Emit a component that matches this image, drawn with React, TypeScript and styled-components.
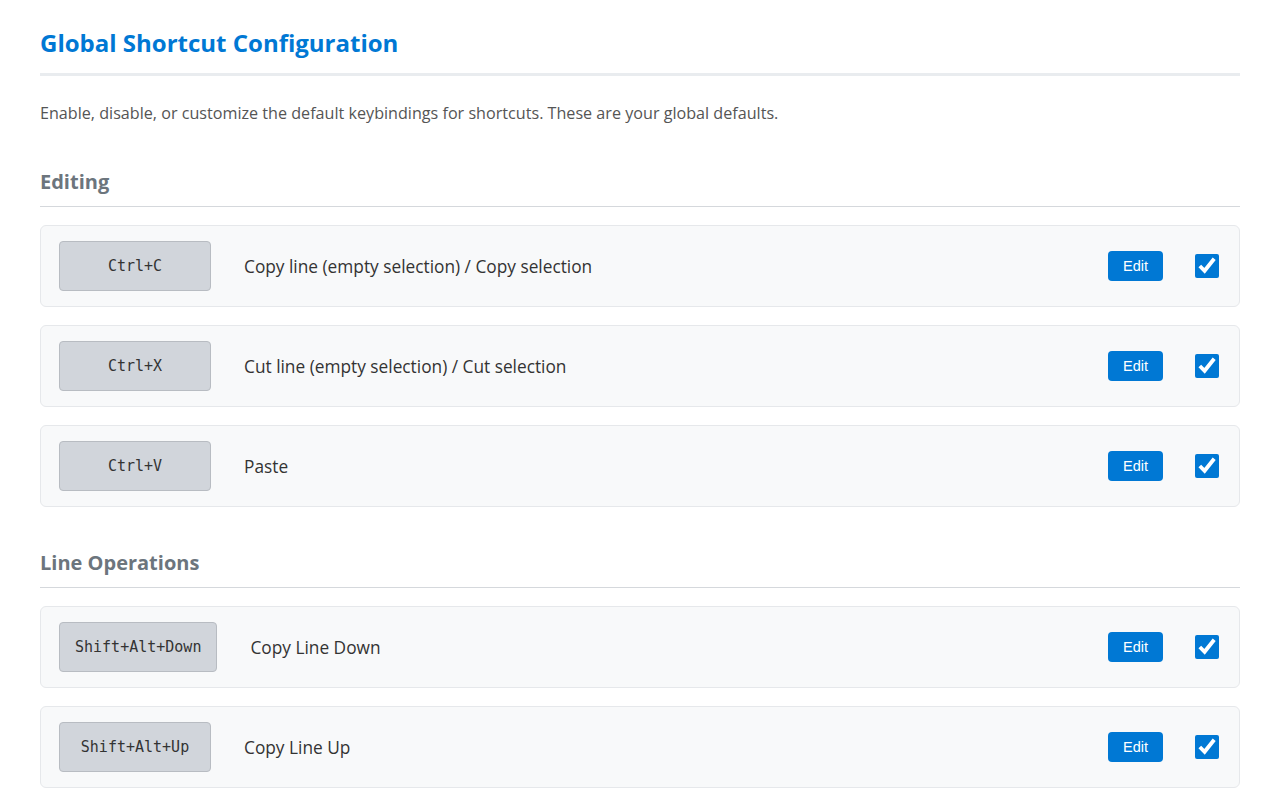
import React from "react";
import styled, { createGlobalStyle } from "styled-components";

const Global = createGlobalStyle`
  html, body { margin: 0; padding: 0; background: #ffffff; }
  body { font-family: "Open Sans", "Noto Sans", sans-serif; color: #333; }
  * { box-sizing: border-box; }
`;

const Page = styled.div`
  display: flex;
  flex-direction: column;
  max-width: 1200px;
  margin: 0 auto;
  padding-top: 27px;
`;

const Title = styled.h1`
  margin: 0;
  font-size: 24px;
  line-height: 32px;
  font-weight: 700;
  color: #0078d4;
  padding-bottom: 14px;
  border-bottom: 3px solid #e9ecef;
`;

const Description = styled.p`
  margin: 25px 0 19px;
  font-size: 16.15px;
  line-height: 24px;
  color: #555;
`;

const Section = styled.section`
  display: flex;
  flex-direction: column;
  gap: 18px;
  margin-top: 24px;
`;

const SectionTitle = styled.h2`
  margin: 0;
  font-size: 20px;
  line-height: 28px;
  font-weight: 700;
  color: #6c757d;
  padding-bottom: 10px;
  border-bottom: 1px solid #d5d8dc;
`;

const Row = styled.div`
  display: flex;
  align-items: center;
  height: 82px;
  padding: 0 20px 0 18px;
  background: #f8f9fa;
  border: 1px solid #e6e8eb;
  border-radius: 6px;
  &:last-child { margin-bottom: 18px; }
`;

const Key = styled.kbd`
  display: flex;
  align-items: center;
  justify-content: center;
  min-width: 152px;
  height: 50px;
  padding: 0 15px;
  background: #d1d5db;
  border: 1px solid #b8bcc2;
  border-radius: 4px;
  font-family: "DejaVu Sans Mono", monospace;
  font-size: 15px;
  font-weight: 400;
  color: #333;
`;

const Label = styled.span`
  flex: 1;
  margin-left: 33px;
  font-size: 17.3px;
  color: #333;
`;

const EditButton = styled.button`
  width: 55px;
  height: 30px;
  padding: 0;
  border: none;
  border-radius: 4px;
  background: #0078d4;
  color: #fff;
  font-family: "Liberation Sans", Arial, sans-serif;
  font-size: 14.5px;
  cursor: pointer;
`;

const Check = styled.input`
  width: 24px;
  height: 24px;
  margin: 0 0 0 32px;
  accent-color: #0078d4;
`;

type Shortcut = { keys: string; label: string };

const sections: { title: string; items: Shortcut[] }[] = [
  {
    title: "Editing",
    items: [
      { keys: "Ctrl+C", label: "Copy line (empty selection) / Copy selection" },
      { keys: "Ctrl+X", label: "Cut line (empty selection) / Cut selection" },
      { keys: "Ctrl+V", label: "Paste" },
    ],
  },
  {
    title: "Line Operations",
    items: [
      { keys: "Shift+Alt+Down", label: "Copy Line Down" },
      { keys: "Shift+Alt+Up", label: "Copy Line Up" },
    ],
  },
];

export default function App() {
  return (
    <>
      <Global />
      <Page>
        <Title>Global Shortcut Configuration</Title>
        <Description>
          Enable, disable, or customize the default keybindings for shortcuts. These are your global defaults.
        </Description>
        {sections.map((s) => (
          <Section key={s.title}>
            <SectionTitle>{s.title}</SectionTitle>
            {s.items.map((it) => (
              <Row key={it.keys}>
                <Key>{it.keys}</Key>
                <Label>{it.label}</Label>
                <EditButton>Edit</EditButton>
                <Check type="checkbox" defaultChecked />
              </Row>
            ))}
          </Section>
        ))}
      </Page>
    </>
  );
}
